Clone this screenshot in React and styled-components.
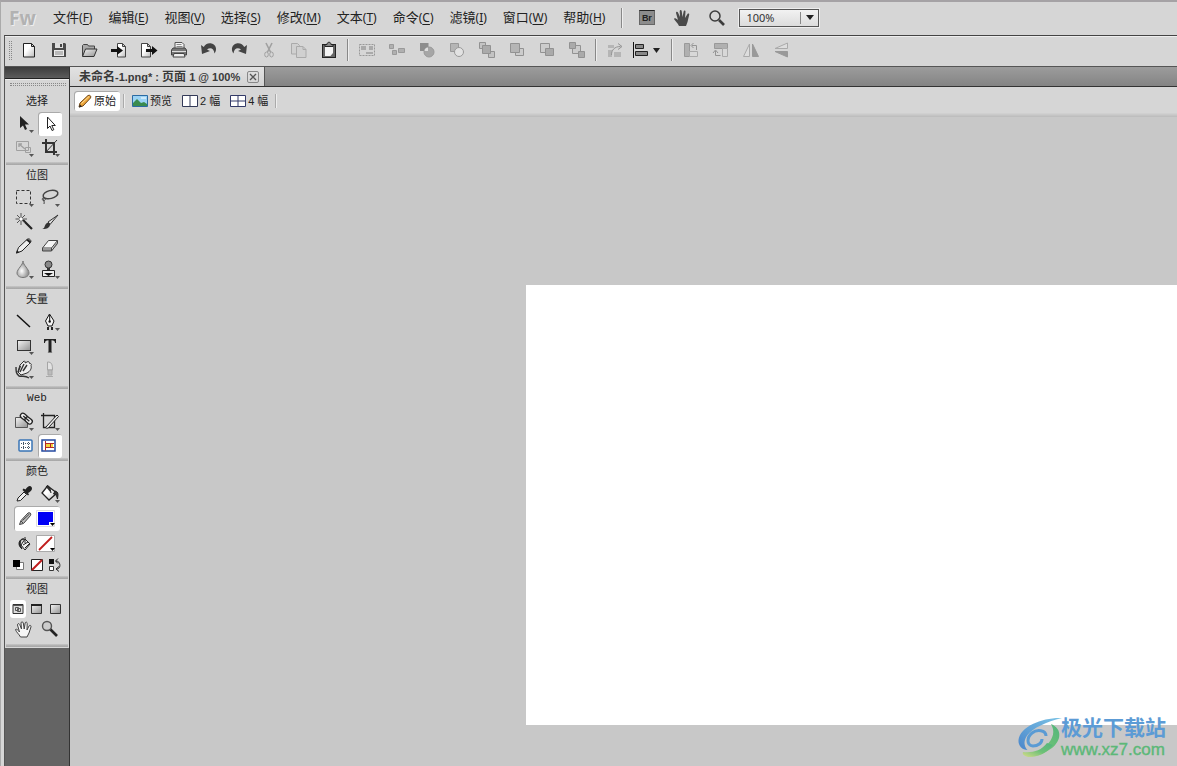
import styled, { createGlobalStyle } from "styled-components";

const MENUS = [
  ["文件", "F"],
  ["编辑", "E"],
  ["视图", "V"],
  ["选择", "S"],
  ["修改", "M"],
  ["文本", "T"],
  ["命令", "C"],
  ["滤镜", "I"],
  ["窗口", "W"],
  ["帮助", "H"],
];

// toolbar icons, drawn on a 20 x 20 grid
const ICONS = {
  new: (
    <path d="M4.5 3.5h8l3 3v10.5h-11z M12.5 3.5v3h3" fill="url(#paper)" stroke="#222" />
  ),
  save: (
    <>
      <path d="M3 3h13l1 1v13H3z" fill="#4a4a4a" />
      <rect x="6" y="3" width="8" height="5" fill="#ddd" />
      <rect x="11" y="4" width="2" height="3" fill="#444" />
      <rect x="5" y="10" width="10" height="6" fill="#ececec" />
      <path d="M6 12h8M6 14h8" stroke="#888" />
    </>
  ),
  open: (
    <>
      <path d="M3.5 16V5.5l1-1h4l1 1.5h6V9" fill="#aaa" stroke="#444" />
      <path d="M6.5 9h11.5l-3 7.5H3.5z" fill="url(#metal)" stroke="#333" />
    </>
  ),
  import: (
    <>
      <path d="M8.5 3.5h5l3 3v10.5h-8z M13.5 3.5v3h3" fill="url(#paper)" stroke="#444" />
      <path d="M2 9h6V6l6 4.5-6 4.5v-3H2z" fill="#111" />
    </>
  ),
  export: (
    <>
      <path d="M2.5 3.5h6l3 3v10.5h-9z M8.5 3.5v3h3" fill="url(#paper)" stroke="#444" />
      <path d="M7 9h6V6l5.5 4.5L13 15v-3H7z" fill="#111" />
    </>
  ),
  print: (
    <>
      <path d="M6 8V2.5h7l2 2V8" fill="#f4f4f4" stroke="#555" />
      <path d="M7.5 4.5h5M7.5 6.5h6" stroke="#888" />
      <path d="M4 8h12l1.500 2v5h-15v-5z" fill="#777" stroke="#444" />
      <path d="M3 11.5h14" stroke="#ddd" />
      <path d="M5 13.5h10l1 3.5H4z" fill="#eee" stroke="#444" />
    </>
  ),
  undo: <path d="M2 5l1 9 8-3-3-1.500c3-2.500 7-1.500 7.500 4 3-4 1.500-9-3-10C9 2.800 6 4.500 4.800 7z" fill="#444" />,
  redo: <path d="M18 5l-1 9-8-3 3-1.500c-3-2.500-7-1.500-7.500 4-3-4-1.500-9 3-10C11 2.800 14 4.500 15.200 7z" fill="#444" />,
  cut: (
    <g stroke="#a0a0a0" fill="none">
      <path d="M7 3l4.500 9M13 3l-4.500 9" strokeWidth="1.600" />
      <ellipse cx="7.500" cy="14.500" rx="1.800" ry="2.500" />
      <ellipse cx="12.500" cy="14.500" rx="1.800" ry="2.500" />
    </g>
  ),
  copy: (
    <g fill="#d0d0d0" stroke="#aaa">
      <path d="M2.5 3.5h6l2 2v8.5h-8z" />
      <path d="M7.5 6.5h6.5l3 3v8h-9.5z M14 6.5v3h3" />
    </g>
  ),
  paste: (
    <>
      <rect x="3.500" y="4.500" width="13" height="13" fill="#666" stroke="#222" />
      <path d="M6 6h8v7l-2.500 3H6z" fill="#f4f4f4" />
      <path d="M6 6.5V4.500h2c0-3 4-3 4 0h2v2z" fill="#888" stroke="#222" />
    </>
  ),
  group: (
    <>
      <path d="M2.5 4.5h15v11h-15z" fill="none" stroke="#999" strokeDasharray="2 1" />
      <path d="M4 6h5v4H4zM12 6h4v4h-4zM9 12h7v2H9z" fill="#aaa" />
    </>
  ),
  ungroup: (
    <g fill="#b0b0b0" stroke="#9a9a9a">
      <path d="M2.5 4.5h4v4h-4zM5.500 10.500h4v4h-4zM11.500 8.500h6v4h-6z" />
    </g>
  ),
  union: (
    <>
      <path d="M3 3h8.500v8H3z" fill="#8d8d8d" />
      <circle cx="12" cy="12" r="5" fill="#a6a6a6" stroke="#999" />
      <path d="M7.500 11h3.500V7.500C9 7.500 7.500 9 7.500 11z" fill="#ddd" />
    </>
  ),
  punch: (
    <>
      <path d="M3.500 3.500h8v8h-8z" fill="#b5b5b5" stroke="#999" />
      <circle cx="12" cy="12" r="4.500" fill="#e2e2e2" stroke="#999" />
    </>
  ),
  front: (
    <g fill="#c3c3c3" stroke="#929292">
      <path d="M2.5 2.5h6v6h-6zM11.5 11.5h6v6h-6z" />
      <path d="M5.5 5.5h8v8h-8z" fill="#aaa" />
    </g>
  ),
  forward: (
    <g stroke="#929292">
      <path d="M8.5 8.5h8v7h-8z" fill="#ccc" />
      <path d="M3.5 3.5h9v9h-9z" fill="#b5b5b5" />
    </g>
  ),
  backward: (
    <g stroke="#929292">
      <path d="M3.5 3.5h9v9h-9z" fill="#ccc" />
      <path d="M8.5 8.5h8v7h-8z" fill="#aaa" />
    </g>
  ),
  back: (
    <g stroke="#929292">
      <path d="M5.5 5.5h8v8h-8z" fill="#ccc" />
      <path d="M2.5 2.5h6v6h-6zM11.5 11.5h6v6h-6z" fill="#aaa" />
    </g>
  ),
  path: (
    <>
      <path d="M3 5h6v3H3zM3 10h4v7H3zM9 12h7v5H9z" fill="#b5b5b5" />
      <path d="M6.500 15c0-5 3-8.500 9-8.500M13 3.500l4 3-4 3" fill="none" stroke="#949494" />
    </>
  ),
  align: (
    <>
      <path d="M2.5 2v16" stroke="#111" />
      <path d="M4.5 4.5h8v4h-8zM4.5 11.5h12v4h-12z" fill="#888" stroke="#222" />
    </>
  ),
  rotateLeft: (
    <>
      <path d="M3.5 3.5h5v13h-5z" fill="#b0b0b0" stroke="#999" />
      <path d="M8.5 11.5h8v5h-8z" fill="#d8d8d8" stroke="#aaa" />
      <path d="M11 5.5h4.5V10M12.5 3l-2.500 2.500 2.500 2.500" fill="none" stroke="#949494" />
    </>
  ),
  rotateRight: (
    <>
      <path d="M3.5 3.5h13v5h-13z" fill="#b0b0b0" stroke="#999" />
      <path d="M11.5 8.5h5v8h-5z" fill="#d8d8d8" stroke="#aaa" />
      <path d="M9.5 15.5h-5V11M2 13l2.500-3L7 13" fill="none" stroke="#949494" />
    </>
  ),
  flipH: (
    <>
      <path d="M8.5 4v12.5h-6z" fill="#ddd" stroke="#aaa" />
      <path d="M11.5 4v12.5h6z" fill="#999" stroke="#999" />
    </>
  ),
  flipV: (
    <>
      <path d="M16.5 3v5.5H4z" fill="#ddd" stroke="#aaa" />
      <path d="M16.5 17v-5.5H4z" fill="#999" stroke="#999" />
    </>
  ),
};

// tool panel icons, drawn on a 24 x 24 grid
const TOOLS = {
  pointer: <path d="M8 4v12l3-2.500 2 4.500 2-1-2-4.500h4z" fill="#222" />,
  subselect: <path d="M9.5 5v11.5l2.500-2.500 2 4.500 1.800-.8-2-4.200h3.500z" fill="#fff" stroke="#222" />,
  scale: (
    <g fill="none" stroke="#a0a0a0">
      <path d="M4.5 5.5h12v9h-12zM13.5 11.5h5v5h-5z" />
      <path d="M7 8l6 5M7 11V8h3" strokeWidth="1.400" />
    </g>
  ),
  crop: (
    <g fill="none" stroke="#333" strokeWidth="2">
      <path d="M8 3v13h11M4 7h12v12" />
      <path d="M7 17L19 4" strokeWidth="1" />
    </g>
  ),
  marquee: <rect x="4.500" y="4.500" width="14" height="13" fill="none" stroke="#333" strokeDasharray="3 2" />,
  lasso: (
    <>
      <ellipse cx="12.500" cy="8.500" rx="7.500" ry="4" transform="rotate(-14 12.500 8.500)" fill="none" stroke="#444" strokeWidth="1.500" />
      <path d="M6 11c-2.500 1-2 4 0 3.500s2-2.500 0-2.500c-1.500 2 1 3 0 6" fill="none" stroke="#444" />
    </>
  ),
  wand: (
    <>
      <path d="M11 10l9 9" stroke="#222" strokeWidth="2.200" />
      <path d="M9 3v12M3.5 9H15M5 5l8 8M13 5l-8 8" stroke="#555" />
      <circle cx="9" cy="9" r="1.500" fill="#fff" />
    </>
  ),
  brush: (
    <>
      <path d="M20 5l-10 7 2 2.500z" fill="#ddd" stroke="#333" />
      <path d="M4 19c3 0 2-4 5-6 3-1 4 2 2 4-2 2-4 2-7 2z" fill="#333" />
    </>
  ),
  pencil: (
    <>
      <path d="M4.5 19l2-5.500L15 5.500c2-2 5 1 3.500 3L10 17z" fill="#eee" stroke="#222" />
      <path d="M4 19.500l1-3.500 2.500 2.500zM14 6l4 3.500 1-2-3-2.500z" fill="#222" />
    </>
  ),
  eraser: (
    <>
      <path d="M4.5 14l6-7.500h9l-6 7.500z" fill="#f5f5f5" stroke="#444" />
      <path d="M4.5 14v3h9v-3M13.500 17l6-7.500v-3" fill="#999" stroke="#444" />
    </>
  ),
  drop: <path d="M11 3c0 4-6 8-6 12 0 2.500 2.500 4.500 6 4.500s6-2 6-4.500c0-4-6-8-6-12z" fill="url(#dropShade)" stroke="#777" />,
  stamp: (
    <>
      <circle cx="10.500" cy="6.500" r="3.500" fill="#888" stroke="#333" />
      <path d="M9 10h3v3H9z" fill="#333" />
      <path d="M4.500 12.500h12v6h-12z" fill="#eee" stroke="#222" />
      <path d="M6 15h9l-4.500 3z" fill="#111" />
    </>
  ),
  line: <path d="M5 5l13 12" stroke="#111" strokeWidth="1.500" />,
  pen: (
    <>
      <path d="M11.500 4L7.500 11l2.500 5h4l2-5z" fill="#f4f4f4" stroke="#111" />
      <path d="M11.700 5v6" stroke="#111" />
      <path d="M9 17h2v3H9zM13 17h2v3h-2z" fill="#222" />
      <circle cx="11.700" cy="11.500" r="1.200" fill="#111" />
    </>
  ),
  rect: <rect x="5.500" y="6.500" width="13" height="10" fill="url(#metal)" stroke="#333" />,
  text: <path d="M6 5h12v4h-1c0-2-1-2.800-3.500-2.800V17c0 1 .5 1.500 2 1.500H8.500c1.500 0 2-.5 2-1.500V6.200C8 6.200 7 7 7 9H6z" fill="#222" />,
  freeform: (
    <>
      <path d="M6 14l2-7 4-4c1 0 1.500 1 1 2l3-1.500c1 0 1.500 1 1 1.500l1.500.5c1 .5 1 1 .5 2 1 3-1 6-4 7.500L9 17z" fill="#eee" stroke="#333" />
      <path d="M4 9c0 5 0 6 3 9 3 1 6-1 10 2M8.500 8L6 14M12 6l-4 8M15 7l-4 6" fill="none" stroke="#333" strokeWidth="1.400" />
    </>
  ),
  knife: (
    <>
      <path d="M9.500 4c4 0 5 2 5 8h-5z" fill="#e2e2e2" stroke="#a5a5a5" />
      <path d="M10 12h4v5h-4z" fill="#bbb" stroke="#a5a5a5" />
      <path d="M8 18.500h7" stroke="#aaa" />
    </>
  ),
  hotspot: (
    <>
      <path d="M3.500 7.500h12v10h-12z" fill="url(#metal)" stroke="#555" />
      <g fill="#eee" stroke="#222" strokeWidth="1.300" transform="rotate(40 14 9)">
        <rect x="7" y="6" width="8" height="5" rx="2.500" />
        <rect x="13" y="6" width="8" height="5" rx="2.500" />
        <path d="M10 8.500h8" />
      </g>
    </>
  ),
  slice: (
    <>
      <path d="M5.500 5.500h11v12h-11zM3 5.500h4M5.500 3v4" fill="none" stroke="#222" strokeWidth="1.300" />
      <path d="M19 5l1.500 1.500-9 10c-1 2-3 2-4 1z" fill="#eee" stroke="#222" />
    </>
  ),
  hideSlices: (
    <>
      <rect x="7" y="6" width="13" height="11" rx="1" fill="#fff" stroke="#3974b5" strokeWidth="1.500" />
      <path d="M9 9.500h9M9 13.500h9M11.500 8v8M16.500 8v8" stroke="#456" strokeDasharray="1 1" />
    </>
  ),
  showSlices: (
    <>
      <rect x="4" y="6" width="13" height="11" fill="#fff" stroke="#244aa0" strokeWidth="1.500" />
      <path d="M8 10h7v4H8z" fill="#f3d33c" />
      <path d="M7.500 7v9.500M7 9.500h9M8 13.500h8M12.500 10v4" stroke="#b22a2a" />
    </>
  ),
  dropper: (
    <>
      <path d="M5 19l1-3 6-6 2.500 2.500-6 6z" fill="#eee" stroke="#222" />
      <path d="M10.500 8l5.500 5.500 1-1-1-1.500c3-1.500 5-4 3.500-6s-4-.5-6 2.500l-2-1z" fill="#222" />
    </>
  ),
  bucket: (
    <>
      <path d="M9.500 4L4 11l7 7 8-7z" fill="url(#paper)" stroke="#222" strokeWidth="1.300" />
      <path d="M8 5c2-3 4 0 5 6M17 9c4 1 3 4 2.500 8-1-3-1-5-4-5z" fill="#333" stroke="#222" />
    </>
  ),
  strokePencil: <path d="M5.500 17.500l1.500-4L14 6c2-1 3.500.5 2.500 2.500l-7 8zM7 14l2 2M8.500 13.500l7-6.500" fill="#bbb" stroke="#444" />,
  fillBucket: (
    <>
      <path d="M11 7l5 5-5 6-4-5z" fill="#f2f2f2" stroke="#222" />
      <path d="M10 7C6 7 5 11 8 17c-4-3-4-8 0-10z" fill="#222" stroke="#222" />
      <path d="M9 13l5-3M11 5v6M11 16l4-4" stroke="#222" />
    </>
  ),
  hand: (
    <path
      d="M8.500 19C7 16 4 14 3.500 11.500c1-1 2.500.5 4 2.500L5.500 7c0-1.500 1.500-2 2.200-.5L9.500 11 9 5c0-1.500 2-1.500 2.300 0l.9 6 1-6c.5-1.500 2-1 2 .5L15 12l2-4c1-1.300 2.300-.5 2 .8L17 15l-2 4z"
      fill="#f6f6f6"
      stroke="#444"
    />
  ),
  zoom: (
    <>
      <path d="M12 11l7 7" stroke="#222" strokeWidth="2.600" />
      <circle cx="9" cy="8" r="4.500" fill="#ccc" stroke="#555" strokeWidth="1.400" />
    </>
  ),
};

const FILE_ACTIONS = [
  ["新建", "new"],
  ["保存", "save"],
  ["打开", "open"],
  ["导入", "import"],
  ["导出", "export"],
  ["打印", "print"],
  ["撤消", "undo"],
  ["重做", "redo"],
  ["剪切", "cut"],
  ["复制", "copy"],
  ["粘贴", "paste"],
];

const ARRANGE_ACTIONS = [
  ["分组", "group"],
  ["取消分组", "ungroup"],
  ["联合", "union"],
  ["打孔", "punch"],
  ["移到最前", "front"],
  ["前移", "forward"],
  ["后移", "backward"],
  ["移到最后", "back"],
];

const ROTATE_ACTIONS = [
  ["逆时针旋转", "rotateLeft"],
  ["顺时针旋转", "rotateRight"],
  ["水平翻转", "flipH"],
  ["垂直翻转", "flipV"],
];

// [label, icon, has flyout, selected]
const SECTIONS = [
  {
    title: "选择",
    pad: 2,
    tools: [
      ["指针", "pointer", true],
      ["部分选定", "subselect", false, true],
      ["缩放", "scale", true],
      ["裁剪", "crop", true],
    ],
  },
  {
    title: "位图",
    pad: 4,
    tools: [
      ["选取框", "marquee", true],
      ["套索", "lasso", true],
      ["魔术棒", "wand"],
      ["刷子", "brush"],
      ["铅笔", "pencil"],
      ["橡皮擦", "eraser"],
      ["模糊", "drop", true],
      ["橡皮图章", "stamp", true],
    ],
  },
  {
    title: "矢量",
    pad: 4,
    tools: [
      ["直线", "line"],
      ["钢笔", "pen", true],
      ["矩形", "rect", true],
      ["文本", "text"],
      ["自由变形", "freeform", true],
      ["刀子", "knife"],
    ],
  },
  {
    title: "Web",
    pad: 0,
    tools: [
      ["热点", "hotspot", true],
      ["切片", "slice", true],
      ["隐藏切片", "hideSlices"],
      ["显示切片", "showSlices", false, true],
    ],
  },
];

function ActionButton({ label, icon }) {
  return (
    <BarButton aria-label={label}>
      <svg width="20" height="20" viewBox="0 0 20 20">{ICONS[icon]}</svg>
    </BarButton>
  );
}

function Tool({ label, icon, flyout, selected }) {
  return (
    <ToolButton aria-label={label} aria-pressed={!!selected} $selected={selected}>
      <svg width="24" height="24" viewBox="0 0 24 24">
        {TOOLS[icon]}
        {flyout && <path d="M17 18h5l-2.500 3z" fill="#555" />}
      </svg>
    </ToolButton>
  );
}

function Gradients() {
  return (
    <HiddenSvg aria-hidden="true">
      <defs>
        <linearGradient id="paper" x1="0" y1="0" x2="1" y2="1">
          <stop offset="0.4" stopColor="#fff" />
          <stop offset="1" stopColor="#bbb" />
        </linearGradient>
        <linearGradient id="metal" x1="0" y1="0" x2="1" y2="1">
          <stop offset="0" stopColor="#f4f4f4" />
          <stop offset="1" stopColor="#929292" />
        </linearGradient>
        <radialGradient id="dropShade" cx="0.4" cy="0.6">
          <stop offset="0" stopColor="#fff" />
          <stop offset="1" stopColor="#999" />
        </radialGradient>
        <linearGradient id="swirlBlue" x1="1" y1="0" x2="0" y2="1">
          <stop offset="0" stopColor="#7cc4e6" />
          <stop offset="1" stopColor="#4a86cb" />
        </linearGradient>
        <linearGradient id="swirlGreen" x1="1" y1="0" x2="0" y2="1">
          <stop offset="0" stopColor="#52b57c" />
          <stop offset="0.5" stopColor="#6cc077" />
          <stop offset="1" stopColor="#d5dc8a" />
        </linearGradient>
      </defs>
    </HiddenSvg>
  );
}

function MenuBar() {
  return (
    <MenuRow>
      <Brand>Fw</Brand>
      <Menus>
        {MENUS.map(([name, key]) => (
          <MenuItem key={name}>
            {name}
            <Mnemonic>
              (<u>{key}</u>)
            </Mnemonic>
          </MenuItem>
        ))}
      </Menus>
      <MenuLine />
      <MenuTool aria-label="Bridge">
        <BridgeMark>Br</BridgeMark>
      </MenuTool>
      <MenuTool aria-label="手形">
        <svg width="18" height="18" viewBox="0 0 18 18">
          <path
            d="M6 17C5 14 2 12 1 10c0-1.500 2-1 4 1L3 4c0-1.500 1.500-1.700 2-.5L7 8l-.3-6c.2-1.400 1.800-1.400 2 0L9.500 8l1.200-5.700c.4-1.200 1.900-.8 1.800.5L12 9l2.500-4c.8-1 2-.3 1.700.8L14.500 13 13 17z"
            fill="#4a4a4a"
          />
        </svg>
      </MenuTool>
      <MenuTool aria-label="缩放">
        <svg width="18" height="18" viewBox="0 0 18 18" fill="none" stroke="#3c3c3c">
          <circle cx="7" cy="7" r="5" strokeWidth="1.500" />
          <path d="M11 11l5 5" strokeWidth="2.600" />
        </svg>
      </MenuTool>
      <ZoomField>
        <select aria-label="缩放比例" defaultValue="100%">
          <option>50%</option>
          <option>100%</option>
          <option>200%</option>
        </select>
        <ZoomArrow>
          <svg width="8" height="5" viewBox="0 0 8 5">
            <path d="M0 0h8L4 5z" fill="#222" />
          </svg>
        </ZoomArrow>
      </ZoomField>
    </MenuRow>
  );
}

function MainToolbar() {
  return (
    <Toolbar>
      <BarGrip />
      {FILE_ACTIONS.map(([label, icon]) => (
        <ActionButton key={icon} label={label} icon={icon} />
      ))}
      <BarLine />
      {ARRANGE_ACTIONS.map(([label, icon]) => (
        <ActionButton key={icon} label={label} icon={icon} />
      ))}
      <BarLine />
      <ActionButton label="路径" icon="path" />
      <BarButton aria-label="对齐" $wide>
        <svg width="30" height="20" viewBox="0 0 30 20">
          {ICONS.align}
          <path d="M22 8h7l-3.500 5z" fill="#222" />
        </svg>
      </BarButton>
      <BarLine />
      {ROTATE_ACTIONS.map(([label, icon]) => (
        <ActionButton key={icon} label={label} icon={icon} />
      ))}
    </Toolbar>
  );
}

function ColorSection() {
  return (
    <Section $pad={2}>
      <SectionTitle>颜色</SectionTitle>
      <ToolGrid>
        <Tool label="滴管" icon="dropper" />
        <Tool label="油漆桶" icon="bucket" flyout />
      </ToolGrid>
      <ColorRow $active>
        <svg width="22" height="24" viewBox="0 0 22 24">{TOOLS.strokePencil}</svg>
        <Swatch aria-label="笔触颜色">
          <svg width="20" height="18" viewBox="0 0 20 18">
            <path d="M.5 .5h18v16H.5z" fill="#fff" stroke="#ddd" />
            <path d="M2 2h15v13H2z" fill="#0000f5" />
            <path d="M13 12h5v4h-5z" fill="#fff" />
            <path d="M14 13h5l-2.500 3z" fill="#000" />
          </svg>
        </Swatch>
      </ColorRow>
      <ColorRow>
        <svg width="22" height="24" viewBox="0 0 22 24">{TOOLS.fillBucket}</svg>
        <Swatch aria-label="填充颜色">
          <svg width="20" height="18" viewBox="0 0 20 18">
            <path d="M.5 .5h18v16H.5z" fill="#fff" stroke="#aaa" />
            <path d="M3 15L16 2" stroke="#c01c1c" strokeWidth="1.800" />
            <path d="M14 13h5l-2.500 3z" fill="#000" />
          </svg>
        </Swatch>
      </ColorRow>
      <SmallRow>
        <SmallButton aria-label="默认颜色">
          <svg width="14" height="14" viewBox="0 0 14 14">
            <path d="M5.500 4.500h7v7h-7z" fill="#fff" stroke="#777" />
            <path d="M2 2h7v7H2z" fill="#000" />
          </svg>
        </SmallButton>
        <SmallButton aria-label="无颜色">
          <svg width="14" height="14" viewBox="0 0 14 14">
            <path d="M1.500 1.500h11v11h-11z" fill="#fff" stroke="#222" />
            <path d="M2 12L12 2" stroke="#c01c1c" strokeWidth="2" />
          </svg>
        </SmallButton>
        <SmallButton aria-label="交换颜色">
          <svg width="14" height="14" viewBox="0 0 14 14">
            <path d="M1 1h5v5H1z" fill="#111" />
            <path d="M1.500 8.500h4v4h-4z" fill="#fff" stroke="#333" />
            <path d="M8 3c5 0 5 8 1 8M10 .5L7.500 3 10 5.500M11 8.500L8 11l3 2.500" fill="none" stroke="#222" />
          </svg>
        </SmallButton>
      </SmallRow>
    </Section>
  );
}

function ViewSection() {
  return (
    <Section $pad={2}>
      <SectionTitle>视图</SectionTitle>
      <SmallRow>
        <SmallButton aria-label="标准屏幕" $selected>
          <svg width="14" height="14" viewBox="0 0 14 14">
            <path d="M2 2.500h10v9H2z" fill="#ddd" stroke="#333" />
            <path d="M2 3.500h10M4.500 5.500h3v3h-3zM6.500 6.500h3v3h-3z" fill="none" stroke="#555" />
          </svg>
        </SmallButton>
        <SmallButton aria-label="带菜单的全屏">
          <svg width="14" height="14" viewBox="0 0 14 14">
            <path d="M1.500 2.500h10v9h-10z" fill="url(#metal)" stroke="#333" />
            <path d="M1 3h11" stroke="#222" strokeWidth="2" />
          </svg>
        </SmallButton>
        <SmallButton aria-label="全屏">
          <svg width="14" height="14" viewBox="0 0 14 14">
            <path d="M2.500 2.500h10v9h-10z" fill="url(#metal)" stroke="#333" />
          </svg>
        </SmallButton>
      </SmallRow>
      <ToolGrid>
        <Tool label="手形" icon="hand" />
        <Tool label="缩放" icon="zoom" />
      </ToolGrid>
    </Section>
  );
}

function ToolPanel() {
  return (
    <Panel>
      <PanelHead />
      <PanelBody>
        <PanelGrip />
        {SECTIONS.map((s) => (
          <Section key={s.title} $pad={s.pad}>
            <SectionTitle $mono={s.title === "Web"}>{s.title}</SectionTitle>
            <ToolGrid>
              {s.tools.map(([label, icon, flyout, selected]) => (
                <Tool key={icon} label={label} icon={icon} flyout={flyout} selected={selected} />
              ))}
            </ToolGrid>
          </Section>
        ))}
        <ColorSection />
        <ViewSection />
      </PanelBody>
    </Panel>
  );
}

function Document() {
  return (
    <Doc>
      <TabStrip>
        <Tab>
          <span>
            未命名<Latin>-1.png* : </Latin>页面<Latin> 1 @ 100%</Latin>
          </span>
          <TabClose aria-label="关闭">
            <svg width="8" height="8" viewBox="0 0 8 8">
              <path d="M1 1l6 6M7 1L1 7" stroke="#555" strokeWidth="1.300" />
            </svg>
          </TabClose>
        </Tab>
      </TabStrip>
      <ViewBar>
        <ViewButton $selected>
          <svg width="14" height="14" viewBox="0 0 14 14">
            <path d="M1 13l1-4L10 1.500c2-1 3.500 1 2.500 2.500L5 12z" fill="#eda53a" stroke="#704718" />
            <path d="M3.500 9.500L11 2.500" stroke="#ffe19a" />
            <path d="M1 13.500l1-3 2 2z" fill="#222" />
          </svg>
          原始
        </ViewButton>
        <ViewLine />
        <ViewButton>
          <svg width="16" height="12" viewBox="0 0 16 12">
            <path d="M.5 .5h15v11H.5z" fill="#9bd3f5" stroke="#2b6ba3" />
            <path d="M1 11V8l4-4 4 4 3-1 3 2v2z" fill="#3a8b4e" />
            <path d="M9 3h5" stroke="#fff" />
          </svg>
          预览
        </ViewButton>
        <ViewButton>
          <svg width="16" height="12" viewBox="0 0 16 12">
            <path d="M.5 .5h15v11H.5zM8 0v12" fill="#fff" stroke="#333a58" />
          </svg>
          2 幅
        </ViewButton>
        <ViewButton>
          <svg width="16" height="12" viewBox="0 0 16 12">
            <path d="M.5 .5h15v11H.5zM8 0v12M0 6h16" fill="#fff" stroke="#333a68" />
          </svg>
          4 幅
        </ViewButton>
        <ViewLine />
      </ViewBar>
      <Workspace>
        <Artboard />
      </Workspace>
    </Doc>
  );
}

function Watermark() {
  return (
    <Mark>
      <svg width="46" height="42" viewBox="0 0 46 42">
        <path d="M44 2C26 1 2 10 .5 24c-.5 6 4 10 9 10-4-4-4-10 0-15C15 12 28 6 44 2z" fill="url(#swirlBlue)" />
        <path d="M28 20c0-6-9-7-14-3s-6 12 1 13c5 0 9-3 9-7" fill="none" stroke="#5a9bd4" strokeWidth="3" />
        <path d="M33 8c12 5 10 17 1 24-7 5-15 9-24 9 8-4 14-6 18-11 8-8 9-15 5-22z" fill="url(#swirlGreen)" />
        <path d="M5 36c9 1 18-1 24-9l6 2c-6 8-14 12-25 12-4-1-6-3-5-5z" fill="url(#swirlGreen)" />
      </svg>
      <MarkText>
        <MarkName>极光下载站</MarkName>
        <MarkUrl>www.xz7.com</MarkUrl>
      </MarkText>
    </Mark>
  );
}

export default function App() {
  return (
    <Shell>
      <GlobalStyle />
      <Gradients />
      <MenuBar />
      <Frame>
        <MainToolbar />
        <Body>
          <ToolPanel />
          <Document />
        </Body>
      </Frame>
      <Watermark />
    </Shell>
  );
}

const GlobalStyle = createGlobalStyle`
  * {
    box-sizing: border-box;
  }

  body {
    margin: 0;
    background: #d6d6d6;
    font-family: "Liberation Sans", "Noto Sans CJK SC", sans-serif;
    color: #222;
  }

  button,
  select {
    margin: 0;
    padding: 0;
    border: 0;
    background: none;
    color: inherit;
    font: inherit;
  }

  svg {
    display: block;
    flex: none;
  }
`;

const HiddenSvg = styled.svg`
  position: absolute;
  width: 0;
  height: 0;
`;

const Shell = styled.div`
  position: relative;
  display: flex;
  flex-direction: column;
  min-height: 100vh;
  overflow: hidden;
  background: #d6d6d6;
  border-top: 2px solid #a5a2a5;
  border-left: 1px solid #aaa;
`;

const MenuRow = styled.header`
  display: flex;
  align-items: center;
  height: 33px;
  padding: 0 0 2px 8px;
`;

const Brand = styled.div`
  width: 38px;
  font: bold 19px/24px "Open Sans", sans-serif;
  color: #b2b2b2;
  text-shadow: 1px 1px 0 #eee;
`;

const Menus = styled.nav`
  display: flex;
  gap: 16px;
  margin-left: 6px;
`;

const MenuItem = styled.button`
  font: 13px/20px "Noto Sans CJK SC", sans-serif;
  white-space: nowrap;
`;

const Mnemonic = styled.span`
  font: 12px/20px "Noto Sans", sans-serif;

  u {
    text-underline-offset: 2px;
  }
`;

const MenuLine = styled.span`
  width: 2px;
  height: 20px;
  margin: 0 6px 0 16px;
  border-left: 1px solid #888;
  border-right: 1px solid #eee;
`;

const MenuTool = styled.button`
  display: flex;
  align-items: center;
  justify-content: center;
  width: 35px;
  height: 24px;
`;

const BridgeMark = styled.span`
  width: 16px;
  height: 15px;
  border: 1px solid #666;
  border-top-color: #222;
  background: #8c8c8c;
  font: bold 9px/14px "Liberation Sans", sans-serif;
`;

const ZoomField = styled.div`
  display: flex;
  align-items: center;
  width: 80px;
  height: 18px;
  margin-left: 5px;
  border: 1px solid #555;
  background: linear-gradient(#f2f2f2, #dcdcdc);
  box-shadow: 0 0 0 1px #eee;

  select {
    flex: 1;
    min-width: 0;
    height: 16px;
    padding-left: 6px;
    appearance: none;
    outline: none;
    font: 11px/16px "Noto Sans", sans-serif;
    color: #333;
  }
`;

const ZoomArrow = styled.span`
  display: flex;
  align-items: center;
  justify-content: center;
  width: 18px;
  height: 12px;
  border-left: 1px solid #888;
  pointer-events: none;
`;

const Frame = styled.div`
  flex: 1;
  display: flex;
  flex-direction: column;
  margin-left: 3px;
  border-top: 1px solid #444;
  border-left: 1px solid #555;
`;

const Toolbar = styled.div`
  display: flex;
  align-items: center;
  height: 31px;
  padding-bottom: 3px;
  border-top: 1px solid #eee;
  border-bottom: 1px solid #555;
`;

const BarGrip = styled.span`
  width: 3px;
  height: 19px;
  margin: 0 2px 0 4px;
  border-left: 1px dotted #888;
  border-right: 1px dotted #888;
`;

const BarButton = styled.button`
  display: flex;
  align-items: center;
  justify-content: center;
  width: ${({ $wide }) => ($wide ? 38 : 30)}px;
  height: 26px;
  padding-right: ${({ $wide }) => ($wide ? 6 : 0)}px;
`;

const BarLine = styled.span`
  width: 2px;
  height: 22px;
  margin: 0 3px;
  border-left: 1px solid #888;
  border-right: 1px solid #eee;
`;

const Body = styled.div`
  flex: 1;
  display: flex;
`;

const Panel = styled.aside`
  display: flex;
  flex-direction: column;
  width: 65px;
  background: #646464;
  border-right: 1px solid #333;
`;

const PanelHead = styled.div`
  height: 12px;
  background: linear-gradient(#3c3c3c, #5c5c5c);
  border-bottom: 1px solid #222;
`;

const PanelBody = styled.div`
  background: #d6d6d6;
  border-top: 1px solid #eee;
`;

const PanelGrip = styled.div`
  height: 3px;
  margin: 3px 3px 6px 5px;
  border-top: 1px dotted #888;
  border-bottom: 1px dotted #888;
`;

const Section = styled.section`
  &::after {
    content: "";
    display: block;
    height: 4px;
    margin: ${({ $pad }) => $pad}px 1px 0;
    background: linear-gradient(#c8c8c8, #a5a5a5 60%, #eee);
  }
`;

const SectionTitle = styled.h2`
  margin: 0;
  padding-bottom: 4px;
  font: 11px/16px ${({ $mono }) => ($mono ? '"Liberation Mono"' : '"Noto Sans CJK SC"')}, sans-serif;
  text-align: center;
`;

const ToolGrid = styled.div`
  display: grid;
  grid-template-columns: 24px 24px;
  column-gap: 2px;
  padding-left: 7px;
`;

const ToolButton = styled.button`
  width: 24px;
  height: 24px;
  border-radius: 3px;
  background: ${({ $selected }) => ($selected ? "#fff" : "none")};
  box-shadow: ${({ $selected }) => ($selected ? "inset 1px 1px 0 #aaa" : "none")};
`;

const ColorRow = styled.div`
  display: flex;
  align-items: center;
  width: 46px;
  height: 25px;
  margin-left: 9px;
  border-radius: 3px;
  background: ${({ $active }) => ($active ? "#fff" : "none")};
  box-shadow: ${({ $active }) => ($active ? "inset 1px 1px 0 #aaa" : "none")};
`;

const Swatch = styled.button`
  width: 20px;
  height: 18px;
`;

const SmallRow = styled.div`
  display: flex;
  justify-content: space-between;
  padding: 0 6px 0 5px;
`;

const SmallButton = styled.button`
  display: flex;
  align-items: center;
  justify-content: center;
  width: 16px;
  height: 18px;
  border-radius: 3px;
  background: ${({ $selected }) => ($selected ? "#fff" : "none")};
`;

const Doc = styled.main`
  flex: 1;
  min-width: 0;
  display: flex;
  flex-direction: column;
`;

const TabStrip = styled.div`
  display: flex;
  height: 20px;
  background: linear-gradient(#9c9c9c, #848484);
  border-bottom: 1px solid #333;
`;

const Tab = styled.div`
  display: flex;
  align-items: center;
  gap: 7px;
  padding: 0 5px 0 9px;
  background: linear-gradient(#e2e2e2, #d2d2d2);
  border-right: 1px solid #555;
  font: bold 12px/18px "Noto Sans CJK SC", sans-serif;
  color: #3a3a3a;
  white-space: pre;
`;

const Latin = styled.span`
  font: bold 11px/18px "Liberation Sans", sans-serif;
`;

const TabClose = styled.button`
  display: flex;
  align-items: center;
  justify-content: center;
  width: 12px;
  height: 12px;
  border: 1px solid #888;
  border-radius: 2px;
`;

const ViewBar = styled.div`
  display: flex;
  align-items: center;
  gap: 2px;
  height: 30px;
  padding: 0 0 2px 4px;
  background: linear-gradient(#d6d6d6 85%, #bbb);
`;

const ViewButton = styled.button`
  display: flex;
  align-items: center;
  gap: 2px;
  height: 20px;
  padding: 0 4px;
  border-radius: 3px;
  background: ${({ $selected }) => ($selected ? "#fff" : "none")};
  box-shadow: ${({ $selected }) => ($selected ? "inset 1px 1px 0 #aaa" : "none")};
  font: 11px/20px "Liberation Sans", "Noto Sans CJK SC", sans-serif;
  white-space: nowrap;
`;

const ViewLine = styled.span`
  width: 2px;
  height: 14px;
  margin: 0 1px;
  border-left: 1px solid #aaa;
  border-right: 1px solid #eee;
`;

const Workspace = styled.div`
  flex: 1;
  padding: 168px 0 41px 456px;
  background: #c8c8c8;
`;

const Artboard = styled.div`
  height: 440px;
  background: #fff;
`;

const Mark = styled.div`
  position: absolute;
  right: 11px;
  bottom: 6px;
  display: flex;
  align-items: center;
`;

const MarkText = styled.div`
  display: flex;
  flex-direction: column;
  gap: 2px;
  margin-left: -3px;
`;

const MarkName = styled.span`
  font: bold 21px/24px "Noto Sans CJK SC", sans-serif;
  color: #5c9bd5;
`;

const MarkUrl = styled.span`
  font: 17px/20px "Liberation Sans", sans-serif;
  color: #5cb878;
  -webkit-text-stroke: 0.4px #5cb878;
`;
